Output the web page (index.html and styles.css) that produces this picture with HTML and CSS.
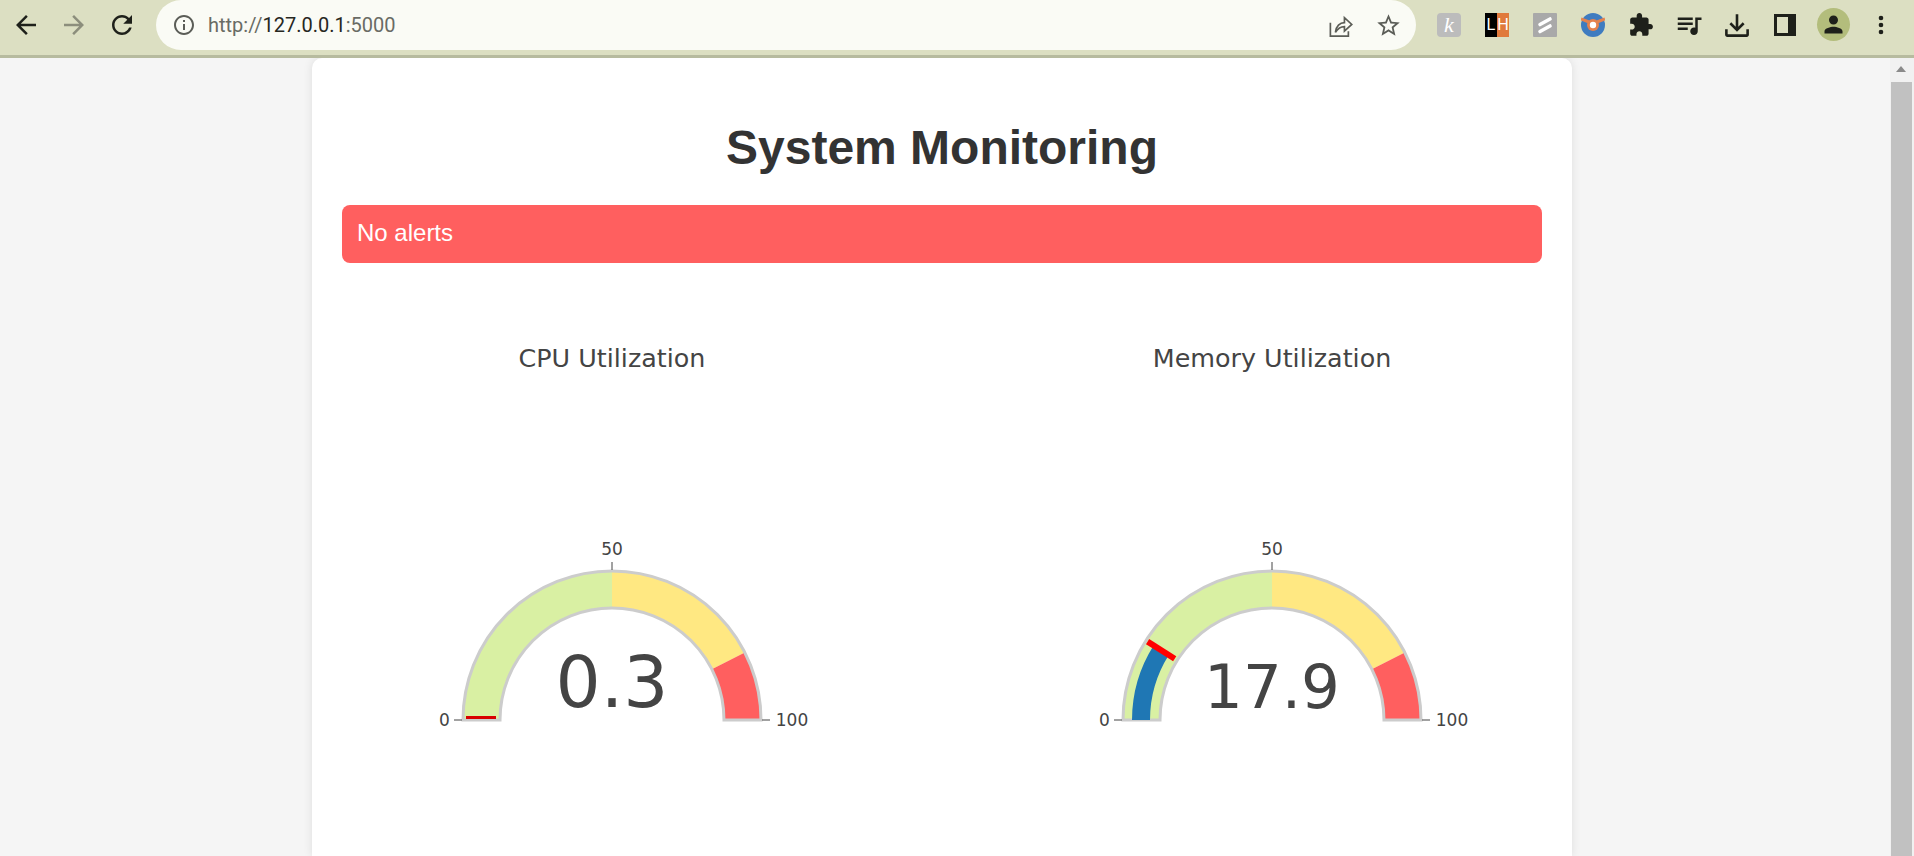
FILE: index.html
```html
<!DOCTYPE html>
<html lang="en">
<head>
    <meta charset="UTF-8">
    <meta name="viewport" content="width=device-width, initial-scale=1.0">
    <title>System Monitoring</title>
    <link rel="stylesheet" href="styles.css">
</head>
<body>
    <header class="toolbar">
        <div class="tool-btn">
            <svg class="icon nav-icon" viewBox="0 0 24 24"><path d="M20 11H7.83l5.59-5.59L12 4l-8 8 8 8 1.41-1.41L7.83 13H20v-2z"></path></svg>
        </div>
        <div class="tool-btn muted">
            <svg class="icon nav-icon" viewBox="0 0 24 24"><path d="M4 11h12.17l-5.59-5.59L12 4l8 8-8 8-1.41-1.41L16.17 13H4v-2z"></path></svg>
        </div>
        <div class="tool-btn">
            <svg class="icon nav-icon" viewBox="0 0 24 24"><path d="M17.65 6.35C16.2 4.9 14.21 4 12 4c-4.42 0-7.99 3.58-7.99 8s3.57 8 7.99 8c3.73 0 6.84-2.55 7.73-6h-2.08c-.82 2.33-3.04 4-5.65 4-3.31 0-6-2.69-6-6s2.69-6 6-6c1.66 0 3.14.69 4.22 1.78L13 11h7V4l-2.35 2.35z"></path></svg>
        </div>

        <div class="urlbar">
            <svg class="icon info-icon" viewBox="0 0 24 24"><path d="M11 7h2v2h-2zm0 4h2v6h-2zm1-9C6.48 2 2 6.48 2 12s4.48 10 10 10 10-4.48 10-10S17.52 2 12 2zm0 18c-4.41 0-8-3.59-8-8s3.59-8 8-8 8 3.59 8 8-3.59 8-8 8z"></path></svg>
            <span class="url"><span class="url-dim">http://</span>127.0.0.1<span class="url-dim">:5000</span></span>
            <svg class="icon share-icon" viewBox="0 0 24 24"><path class="line-icon" d="M3 9.5V21.5H19V17M7.5 18C8 12.5 11.5 9.5 15.5 9.5V5L22 11L15.5 17V13C12 13 9.5 14.8 7.5 18Z"></path></svg>
            <svg class="icon star-icon" viewBox="0 0 24 24"><path d="M22 9.24l-7.19-.62L12 2 9.19 8.63 2 9.24l5.46 4.73L5.82 21 12 17.27 18.18 21l-1.63-7.03L22 9.24zM12 15.4l-3.76 2.27 1-4.28-3.32-2.88 4.38-.38L12 6.1l1.71 4.04 4.38.38-3.32 2.88 1 4.28L12 15.4z"></path></svg>
        </div>

        <div class="extensions">
            <div class="tool-btn"><span class="ext ext-k">k</span></div>
            <div class="tool-btn"><span class="ext ext-lh"><span class="lh-l">L</span><span class="lh-h">H</span></span></div>
            <div class="tool-btn">
                <svg class="ext-svg" viewBox="0 0 24 24"><rect width="24" height="24" rx="1" fill="#a9a9a9"></rect><path d="M7 11.5L17 6M7 18.5L17 13" stroke="#fff" stroke-width="3.6" stroke-linecap="round"></path></svg>
            </div>
            <div class="tool-btn">
                <svg class="ext-svg" viewBox="0 0 24 24"><circle cx="12" cy="12" r="12" fill="#3f7cc0"></circle><path d="M0 6L8 9M24 6L16 9" stroke="#e5824e" stroke-width="3"></path><circle cx="12" cy="12" r="6" fill="#e5824e"></circle><circle cx="12" cy="12" r="3.2" fill="#fff"></circle></svg>
            </div>
            <div class="tool-btn">
                <svg class="icon puzzle-icon" viewBox="0 0 24 24"><path d="M20.5 11H19V7c0-1.1-.9-2-2-2h-4V3.5C13 2.12 11.88 1 10.5 1S8 2.12 8 3.5V5H4c-1.1 0-1.99.9-1.99 2v3.8H3.5c1.49 0 2.7 1.21 2.7 2.7s-1.21 2.7-2.7 2.7H2V20c0 1.1.9 2 2 2h3.8v-1.5c0-1.49 1.21-2.7 2.7-2.7 1.49 0 2.7 1.21 2.7 2.7V22H17c1.1 0 2-.9 2-2v-4h1.5c1.38 0 2.5-1.12 2.5-2.5S21.88 11 20.5 11z"></path></svg>
            </div>
            <div class="tool-btn">
                <svg class="icon queue-icon" viewBox="0 0 24 24"><path d="M15 6H3v2h12V6zm0 4H3v2h12v-2zM3 16h8v-2H3v2zM17 6v8.18c-.31-.11-.65-.18-1-.18-1.66 0-3 1.34-3 3s1.34 3 3 3 3-1.34 3-3V8h3V6h-5z"></path></svg>
            </div>
            <div class="tool-btn">
                <svg class="icon download-icon" viewBox="0 0 24 24"><path d="M13.2 2h-2.4v11.6L6.7 9.5 5 11.2l7 7 7-7-1.7-1.7-4.1 4.1zM1 16v5c0 1.1.9 2 2 2h18c1.1 0 2-.9 2-2v-5h-2.4v4.6H3.4V16z"></path></svg>
            </div>
            <div class="tool-btn">
                <svg class="icon" viewBox="0 0 24 24"><path fill-rule="evenodd" d="M1 1H23V23H1ZM4 4V20H15V4Z"></path></svg>
            </div>
            <div class="tool-btn">
                <div class="avatar">
                    <svg class="icon person-icon" viewBox="0 0 24 24"><path d="M12 12c2.21 0 4-1.79 4-4s-1.79-4-4-4-4 1.79-4 4 1.79 4 4 4zm0 2c-2.67 0-8 1.34-8 4v2h16v-2c0-2.66-5.33-4-8-4z"></path></svg>
                </div>
            </div>
            <div class="tool-btn">
                <svg class="icon dots-icon" viewBox="0 0 24 24"><path d="M12 8a2 2 0 1 0 0-4 2 2 0 0 0 0 4zm0 2a2 2 0 1 0 0 4 2 2 0 0 0 0-4zm0 6a2 2 0 1 0 0 4 2 2 0 0 0 0-4z"></path></svg>
            </div>
        </div>
    </header>

    <div class="viewport">
        <main class="container">
            <h1>System Monitoring</h1>
            <div class="alert">No alerts</div>

            <div class="charts">
                <svg class="gauge" viewBox="0 0 540 450">
                    <text class="gauge-title" x="270" y="84">CPU Utilization</text>
                    <path class="band-green" d="M121 437A149 149 0 0 1 270 288L270 325A112 112 0 0 0 158 437Z"></path>
                    <path class="band-yellow" d="M270 288A149 149 0 0 1 402.8 369.4L369.8 386.2A112 112 0 0 0 270 325Z"></path>
                    <path class="band-red" d="M402.8 369.4A149 149 0 0 1 419 437L382 437A112 112 0 0 0 369.8 386.2Z"></path>
                    <path class="band-outline" d="M121 437A149 149 0 0 1 419 437L382 437A112 112 0 0 0 158 437Z"></path>
                    <line class="threshold-flat" x1="124" y1="434.5" x2="154" y2="434.5"></line>
                    <line class="tick" x1="270" y1="279" x2="270" y2="287"></line>
                    <line class="tick" x1="112" y1="437" x2="120" y2="437"></line>
                    <line class="tick" x1="420" y1="437" x2="428" y2="437"></line>
                    <text class="tick-label" x="270" y="272">50</text>
                    <text class="tick-label" x="102.5" y="443">0</text>
                    <text class="tick-label" x="450" y="443">100</text>
                    <text class="gauge-value" x="270" y="424">0.3</text>
                </svg>

                <svg class="gauge" viewBox="0 0 540 450">
                    <text class="gauge-title" x="270" y="84">Memory Utilization</text>
                    <path class="band-green" d="M121 437A149 149 0 0 1 270 288L270 325A112 112 0 0 0 158 437Z"></path>
                    <path class="band-yellow" d="M270 288A149 149 0 0 1 402.8 369.4L369.8 386.2A112 112 0 0 0 270 325Z"></path>
                    <path class="band-red" d="M402.8 369.4A149 149 0 0 1 419 437L382 437A112 112 0 0 0 369.8 386.2Z"></path>
                    <path class="band-outline" d="M121 437A149 149 0 0 1 419 437L382 437A112 112 0 0 0 158 437Z"></path>
                    <path class="bar" d="M130 437A140 140 0 0 1 151.6 362.4L166.8 372A122 122 0 0 0 148 437Z"></path>
                    <line class="threshold" x1="145.6" y1="358.6" x2="172.7" y2="375.7"></line>
                    <line class="tick" x1="270" y1="279" x2="270" y2="287"></line>
                    <line class="tick" x1="112" y1="437" x2="120" y2="437"></line>
                    <line class="tick" x1="420" y1="437" x2="428" y2="437"></line>
                    <text class="tick-label" x="270" y="272">50</text>
                    <text class="tick-label" x="102.5" y="443">0</text>
                    <text class="tick-label" x="450" y="443">100</text>
                    <text class="gauge-value small" x="270" y="425">17.9</text>
                </svg>
            </div>
        </main>

        <div class="scrollbar">
            <div class="scroll-arrow"></div>
            <div class="scroll-thumb"></div>
        </div>
    </div>
</body>
</html>
```

FILE: styles.css
```css
html, body {
    height: 100%;
}
body {
    margin: 0;
    display: flex;
    flex-direction: column;
    overflow: hidden;
    background: #f5f5f5;
    font-family: "Liberation Sans", Arial, sans-serif;
}

/* browser chrome */
.toolbar {
    flex: none;
    display: flex;
    height: 55px;
    padding: 0 0 0 2px;
    background: #dcdfc2;
    border-bottom: 3px solid #b7bb9f;
}
.tool-btn {
    flex: none;
    width: 48px;
    height: 49px;
    display: flex;
    align-items: center;
    justify-content: center;
    color: #1e201a;
}
.tool-btn.muted {
    color: #8c8e7c;
}
.icon {
    width: 24px;
    height: 24px;
    fill: currentColor;
}
.nav-icon {
    width: 30px;
    height: 30px;
}
.puzzle-icon {
    width: 26px;
    height: 26px;
}
.queue-icon {
    width: 30px;
    height: 30px;
}
.download-icon {
    width: 26px;
    height: 26px;
}
.person-icon {
    width: 27px;
    height: 27px;
}
.dots-icon {
    width: 28px;
    height: 28px;
}
.urlbar {
    flex: none;
    display: flex;
    align-items: center;
    width: 1260px;
    height: 50px;
    margin: 0 9px 0 10px;
    background: #fafbf5;
    border-radius: 25px;
    color: #5b5d57;
}
.info-icon {
    margin-left: 16px;
}
.url {
    flex: 1;
    margin-left: 12px;
    font-family: Roboto, "Liberation Sans", sans-serif;
    font-size: 20px;
    color: #26271f;
}
.url-dim {
    color: #696b64;
}
.line-icon {
    fill: none;
    stroke: currentColor;
    stroke-width: 1.5;
}
.share-icon {
    width: 27px;
    height: 27px;
    margin-right: 21px;
}
.star-icon {
    width: 27px;
    height: 27px;
    margin-right: 14px;
}
.extensions {
    display: flex;
}
.ext {
    width: 24px;
    height: 24px;
    display: flex;
}
.ext-svg {
    width: 24px;
    height: 24px;
}
.ext-k {
    align-items: center;
    justify-content: center;
    background: #bcbcbc;
    border-radius: 4px;
    color: #fff;
    font-family: "Liberation Serif", serif;
    font-style: italic;
    font-size: 22px;
}
.ext-lh {
    font-size: 16px;
    color: #fff;
    line-height: 24px;
    text-align: center;
}
.lh-l {
    width: 12px;
    background: #000;
}
.lh-h {
    width: 12px;
    background: #e07a3c;
}
.avatar {
    width: 33px;
    height: 33px;
    display: flex;
    align-items: center;
    justify-content: center;
    border-radius: 50%;
    background: #b3bd7c;
}

/* page */
.viewport {
    flex: 1;
    min-height: 0;
    display: flex;
    overflow: hidden;
}
.container {
    flex: none;
    width: 1200px;
    margin-left: 312px;
    padding: 30px;
    background: #fff;
    border-radius: 10px 10px 0 0;
    box-shadow: 0 0 10px rgba(0, 0, 0, 0.1);
}
h1 {
    margin: 32px 0 30px;
    font-size: 48px;
    color: #333;
    text-align: center;
}
.alert {
    padding: 14px 15px 16px;
    background: #ff5f5f;
    border-radius: 8px;
    color: #fff;
    font-size: 24px;
}
.charts {
    display: grid;
    grid-template-columns: 540px 540px;
    gap: 120px;
    margin-top: 20px;
}

/* gauges */
.gauge {
    display: block;
    width: 540px;
    height: 450px;
    font-family: "DejaVu Sans", Verdana, sans-serif;
}
.gauge text {
    fill: #444;
    text-anchor: middle;
}
.gauge .gauge-title {
    font-size: 25.4px;
}
.gauge .tick-label {
    font-size: 17px;
}
.gauge .gauge-value {
    font-size: 71px;
}
.gauge .gauge-value.small {
    font-size: 61px;
}
.band-green {
    fill: #d9f0a3;
}
.band-yellow {
    fill: #ffe882;
}
.band-red {
    fill: #ff5f5f;
}
.band-outline {
    fill: none;
    stroke: #ccc;
    stroke-width: 3;
}
.bar {
    fill: #1f77b4;
}
.threshold {
    stroke: #f00;
    stroke-width: 6;
}
.threshold-flat {
    stroke: #d80000;
    stroke-width: 3;
}
.tick {
    stroke: #444;
    stroke-width: 1;
}

/* window scrollbar */
.scrollbar {
    flex: none;
    display: flex;
    flex-direction: column;
    align-items: flex-start;
    width: 23px;
    margin-left: 318px;
    padding-left: 1px;
    background: #f1f1f1;
}
.scroll-arrow {
    width: 0;
    height: 0;
    margin: 8px 0 0 5px;
    border-left: 5px solid transparent;
    border-right: 5px solid transparent;
    border-bottom: 6px solid #8a8a8a;
}
.scroll-thumb {
    width: 21px;
    flex: 1;
    margin-top: 10px;
    background: #c1c1c1;
}
```
